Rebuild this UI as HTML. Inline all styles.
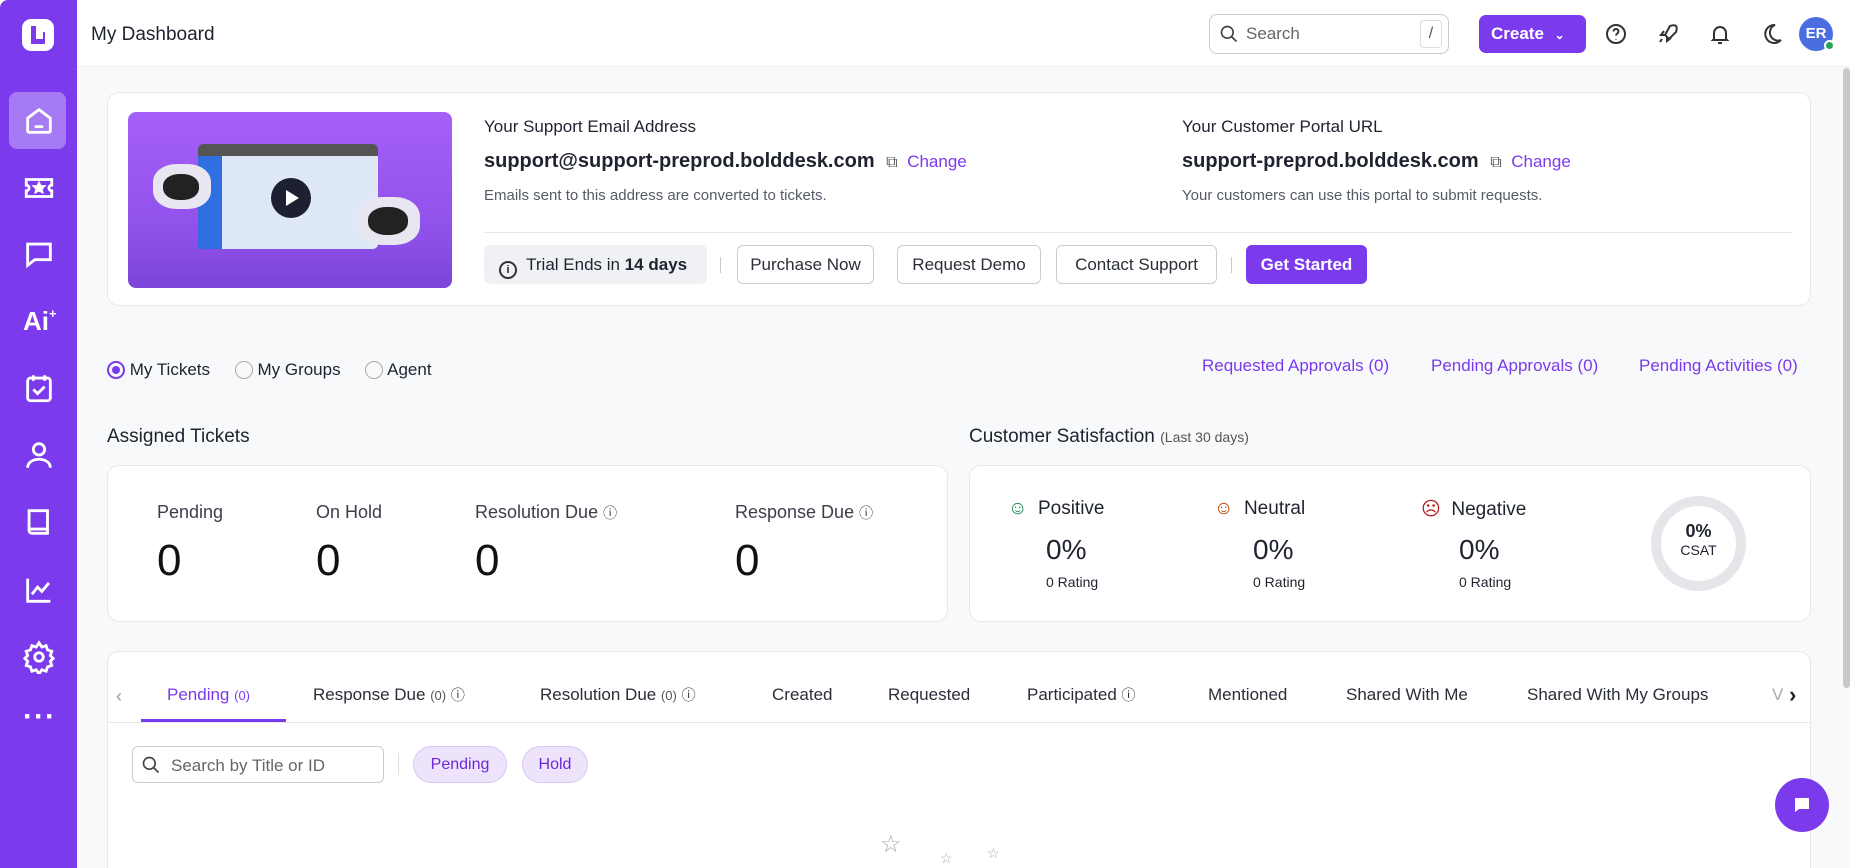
<!DOCTYPE html>
<html style="overflow:hidden;width:1850px;height:868px"><head><meta charset="utf-8"><style>
*{box-sizing:border-box;margin:0;padding:0}
body{width:1850px;height:868px;overflow:hidden;background:#f8f9fb;font-family:"Liberation Sans",sans-serif;color:#1f2330;position:relative}
.a{position:absolute}
.side{left:0;top:0;width:77px;height:868px;background:#7c3aed;border-radius:8px 0 0 0}
.ic{position:absolute;left:22px;width:34px;height:34px}
.hdr{left:77px;top:0;width:1773px;height:67px;background:#fff;border-bottom:1px solid #eceef2}
.card{background:#fff;border:1px solid #e6e8ec;border-radius:12px}
.btn{position:absolute;top:245px;height:39px;border:1px solid #c9ccd3;border-radius:6px;background:#fff;font-size:17px;line-height:37px;text-align:center;color:#2a2e38}
.lnk{color:#7c3aed}
.small{font-size:15px;color:#555b66}
.lbl{font-size:18px;color:#3a3f4a}
.num{font-size:44px;color:#111}
.tab{position:absolute;top:685px;font-size:17px;color:#2a2e38}
.tab small{font-size:13px;color:#555}
</style></head><body>
<div class="a side">
 <svg class="a" style="left:19px;top:16px" width="38" height="38" viewBox="0 0 38 38"><rect x="3" y="3" width="32" height="32" rx="9" fill="#fff"/><path d="M12 10v18h14V16H17v-6z" fill="#7c3aed"/><rect x="17" y="16" width="7" height="7" fill="#fff"/></svg>
 <div class="a" style="left:9px;top:92px;width:57px;height:57px;background:#a57af3;border-radius:8px"></div>
 <svg class="ic" style="top:104px" viewBox="0 0 24 24" fill="none" stroke="#fff" stroke-width="2"><path d="M4 10l8-6 8 6v9a1 1 0 01-1 1H5a1 1 0 01-1-1z"/><path d="M9 16h6"/></svg>
 <svg class="ic" style="top:171px" viewBox="0 0 24 24" fill="none" stroke="#fff" stroke-width="2"><path d="M3 6h18v4a2 2 0 000 4v4H3v-4a2 2 0 000-4z"/><path d="M12 9l1 2h2l-1.5 1.5.5 2-2-1-2 1 .5-2L9 11h2z" fill="#fff"/></svg>
 <svg class="ic" style="top:237px" viewBox="0 0 24 24" fill="none" stroke="#fff" stroke-width="2"><path d="M4 5h16v11H9l-5 4z"/></svg>
 <div class="a" style="left:23px;top:306px;color:#fff;font-weight:bold;font-size:26px">Ai<span style="font-size:13px;vertical-align:top">+</span></div>
 <svg class="ic" style="top:371px" viewBox="0 0 24 24" fill="none" stroke="#fff" stroke-width="2"><rect x="4" y="5" width="16" height="16" rx="2"/><path d="M8 3v4M16 3v4M8 13l3 3 5-5"/></svg>
 <svg class="ic" style="top:438px" viewBox="0 0 24 24" fill="none" stroke="#fff" stroke-width="2"><circle cx="12" cy="8" r="4"/><path d="M4 21c0-4 4-6 8-6s8 2 8 6"/></svg>
 <svg class="ic" style="top:505px" viewBox="0 0 24 24" fill="none" stroke="#fff" stroke-width="2"><path d="M5 4h13v16H7a2 2 0 01-2-2z"/><path d="M5 17h13"/></svg>
 <svg class="ic" style="top:573px" viewBox="0 0 24 24" fill="none" stroke="#fff" stroke-width="2"><path d="M4 4v16h16M7 15l4-5 3 3 5-6"/></svg>
 <svg class="ic" style="top:640px" viewBox="0 0 24 24" fill="none" stroke="#fff" stroke-width="2"><circle cx="12" cy="12" r="3"/><path d="M12 2l2 3 3-1 1 3 3 1-1 3 2 2-2 2 1 3-3 1-1 3-3-1-2 3-2-3-3 1-1-3-3-1 1-3-2-2 2-2-1-3 3-1 1-3 3 1z"/></svg>
 <div class="a" style="left:23px;top:700px;color:#fff;font-size:30px;font-weight:bold;letter-spacing:1px">···</div>
</div>
<div class="a hdr">
 <div class="a" style="left:14px;top:24px;font-size:19px">My Dashboard</div>
 <div class="a" style="left:1132px;top:14px;width:240px;height:40px;border:1px solid #c9ccd3;border-radius:8px">
  <svg class="a" style="left:9px;top:9px" width="20" height="20" viewBox="0 0 24 24" fill="none" stroke="#444" stroke-width="2"><circle cx="10" cy="10" r="7"/><path d="M15 15l6 6"/></svg>
  <span class="a" style="left:36px;top:9px;font-size:17px;color:#666">Search</span>
  <span class="a" style="right:6px;top:5px;width:22px;height:28px;border:1px solid #ddd;border-radius:4px;text-align:center;line-height:26px;color:#555">/</span>
 </div>
 <div class="a" style="left:1402px;top:15px;width:107px;height:38px;background:#7c3aed;border-radius:7px;color:#fff;font-size:17px;font-weight:bold;line-height:38px;padding-left:12px">Create <span style="font-size:12px;margin-left:6px">&#8964;</span></div>
 <svg class="a" style="left:1527px;top:22px" width="24" height="24" viewBox="0 0 24 24" fill="none" stroke="#333" stroke-width="2"><circle cx="12" cy="12" r="9"/><path d="M9.5 9.5a2.5 2.5 0 015 0c0 2-2.5 2-2.5 4M12 17v.5"/></svg>
 <svg class="a" style="left:1579px;top:22px" width="24" height="24" viewBox="0 0 24 24" fill="none" stroke="#333" stroke-width="2"><path d="M14 4c3-1 5-1 6 0 1 1 1 3 0 6l-7 7-4-4z"/><path d="M9 13l-4 0 3-4M11 15v4l4-3M6 17l-2 3"/></svg>
 <svg class="a" style="left:1631px;top:22px" width="24" height="24" viewBox="0 0 24 24" fill="none" stroke="#333" stroke-width="2"><path d="M6 17V11a6 6 0 0112 0v6l1 1H5zM10 21h4"/></svg>
 <svg class="a" style="left:1683px;top:22px" width="24" height="24" viewBox="0 0 24 24" fill="none" stroke="#333" stroke-width="2"><path d="M15 3a9 9 0 106 15A8 8 0 0115 3z"/></svg>
 <div class="a" style="left:1722px;top:17px;width:34px;height:34px;border-radius:50%;background:#4a6ee0;color:#fff;font-size:15px;font-weight:bold;text-align:center;line-height:34px">ER</div>
 <div class="a" style="left:1747px;top:40px;width:11px;height:11px;border-radius:50%;background:#22a55a;border:2px solid #fff"></div>
</div>
<div class="a" style="left:1843px;top:68px;width:7px;height:620px;background:#c8c8c8;border-radius:4px"></div>

<div class="a card" style="left:107px;top:92px;width:1704px;height:214px">
 <div class="a" style="left:20px;top:19px;width:324px;height:176px;border-radius:8px;background:linear-gradient(#a560f7,#8f50ea 70%,#7a45d8)">
  <div class="a" style="left:70px;top:32px;width:180px;height:105px;background:#dfe8f7;border-radius:5px;border-top:12px solid #555"></div>
  <div class="a" style="left:70px;top:44px;width:24px;height:93px;background:#2f6fe0"></div>
  <div class="a" style="left:25px;top:52px;width:58px;height:45px;background:#e8e6f0;border-radius:40%"></div>
  <div class="a" style="left:35px;top:62px;width:36px;height:26px;background:#222;border-radius:45%"></div>
  <div class="a" style="left:230px;top:85px;width:62px;height:48px;background:#e8e6f0;border-radius:40%"></div>
  <div class="a" style="left:240px;top:95px;width:40px;height:28px;background:#222;border-radius:45%"></div>
  <div class="a" style="left:143px;top:66px;width:40px;height:40px;border-radius:50%;background:#1c2030"></div>
  <div class="a" style="left:158px;top:78px;width:0;height:0;border-left:13px solid #fff;border-top:8px solid transparent;border-bottom:8px solid transparent"></div>
 </div>
 <div class="a" style="left:376px;top:24px;font-size:17px">Your Support Email Address</div>
 <div class="a" style="left:376px;top:57px;font-size:20px;font-weight:bold">support@support-preprod.bolddesk.com <span style="font-size:16px;color:#555;font-weight:normal;margin-left:6px">&#10697;</span> <span class="lnk" style="font-size:17px;font-weight:normal;margin-left:4px">Change</span></div>
 <div class="a small" style="left:376px;top:94px">Emails sent to this address are converted to tickets.</div>
 <div class="a" style="left:1074px;top:24px;font-size:17px">Your Customer Portal URL</div>
 <div class="a" style="left:1074px;top:57px;font-size:20px;font-weight:bold">support-preprod.bolddesk.com <span style="font-size:16px;color:#555;font-weight:normal;margin-left:6px">&#10697;</span> <span class="lnk" style="font-size:17px;font-weight:normal;margin-left:4px">Change</span></div>
 <div class="a small" style="left:1074px;top:94px">Your customers can use this portal to submit requests.</div>
 <div class="a" style="left:376px;top:139px;width:1308px;border-top:1px solid #e6e8ec"></div>
</div>
<div class="a" style="left:484px;top:245px;width:223px;height:39px;background:#f0f1f4;border-radius:6px;font-size:17px;line-height:39px;padding-left:15px"><span style="display:inline-block;width:18px;height:18px;border:2px solid #333;border-radius:50%;font-size:11px;line-height:14px;text-align:center;vertical-align:-3px;font-weight:bold">i</span>&nbsp; Trial Ends in <b>14 days</b></div>
<div class="a" style="left:720px;top:257px;height:16px;border-left:1px solid #ccc"></div>
<div class="btn" style="left:737px;width:137px">Purchase Now</div>
<div class="btn" style="left:897px;width:144px">Request Demo</div>
<div class="btn" style="left:1056px;width:161px">Contact Support</div>
<div class="a" style="left:1231px;top:257px;height:16px;border-left:1px solid #ccc"></div>
<div class="btn" style="left:1246px;width:121px;background:#7c3aed;border-color:#7c3aed;color:#fff;font-weight:bold">Get Started</div>

<div class="a" style="left:107px;top:360px;font-size:17px;line-height:20px">
 <span style="display:inline-block;width:18px;height:18px;border:2px solid #7c3aed;border-radius:50%;vertical-align:-4px;position:relative"><span style="position:absolute;left:3px;top:3px;width:8px;height:8px;border-radius:50%;background:#7c3aed"></span></span> My Tickets
 <span style="display:inline-block;width:18px;height:18px;border:1px solid #aaa;border-radius:50%;vertical-align:-4px;margin-left:20px"></span> My Groups
 <span style="display:inline-block;width:18px;height:18px;border:1px solid #aaa;border-radius:50%;vertical-align:-4px;margin-left:20px"></span> Agent
</div>
<div class="a lnk" style="left:1202px;top:356px;font-size:17px">Requested Approvals (0)</div>
<div class="a lnk" style="left:1431px;top:356px;font-size:17px">Pending Approvals (0)</div>
<div class="a lnk" style="left:1639px;top:356px;font-size:17px">Pending Activities (0)</div>

<div class="a" style="left:107px;top:426px;font-size:19px">Assigned Tickets</div>
<div class="a card" style="left:107px;top:465px;width:841px;height:157px">
 <div class="a lbl" style="left:49px;top:36px">Pending</div><div class="a num" style="left:49px;top:70px">0</div>
 <div class="a lbl" style="left:208px;top:36px">On Hold</div><div class="a num" style="left:208px;top:70px">0</div>
 <div class="a lbl" style="left:367px;top:36px">Resolution Due <span style="font-size:14px">&#9432;</span></div><div class="a num" style="left:367px;top:70px">0</div>
 <div class="a lbl" style="left:627px;top:36px">Response Due <span style="font-size:14px">&#9432;</span></div><div class="a num" style="left:627px;top:70px">0</div>
</div>
<div class="a" style="left:969px;top:426px;font-size:19px">Customer Satisfaction <span style="font-size:14px;color:#555">(Last 30 days)</span></div>
<div class="a card" style="left:969px;top:465px;width:842px;height:157px">
 <div class="a" style="left:38px;top:32px;font-size:19px"><span style="color:#1a8a4a">&#9786;</span>&nbsp; Positive</div>
 <div class="a" style="left:76px;top:68px;font-size:28px">0%</div><div class="a" style="left:76px;top:108px;font-size:14px">0 Rating</div>
 <div class="a" style="left:244px;top:32px;font-size:19px"><span style="color:#c2410c">&#9786;</span>&nbsp; Neutral</div>
 <div class="a" style="left:283px;top:68px;font-size:28px">0%</div><div class="a" style="left:283px;top:108px;font-size:14px">0 Rating</div>
 <div class="a" style="left:451px;top:32px;font-size:19px"><span style="color:#b91c1c">&#9785;</span>&nbsp; Negative</div>
 <div class="a" style="left:489px;top:68px;font-size:28px">0%</div><div class="a" style="left:489px;top:108px;font-size:14px">0 Rating</div>
 <div class="a" style="left:681px;top:30px;width:95px;height:95px;border-radius:50%;border:10px solid #e5e6e9;text-align:center;padding-top:15px"><div style="font-size:18px;font-weight:bold">0%</div><div style="font-size:14px">CSAT</div></div>
</div>

<div class="a card" style="left:107px;top:651px;width:1704px;height:230px"></div>
<div class="a" style="left:107px;top:722px;width:1704px;border-top:1px solid #e6e8ec"></div>
<div class="a" style="left:116px;top:686px;font-size:18px;color:#999">&#8249;</div>
<div class="tab" style="left:167px;color:#7c3aed">Pending <small style="color:#7c3aed">(0)</small></div>
<div class="a" style="left:141px;top:719px;width:145px;height:3px;background:#7c3aed"></div>
<div class="tab" style="left:313px">Response Due <small>(0)</small> <span style="font-size:14px">&#9432;</span></div>
<div class="tab" style="left:540px">Resolution Due <small>(0)</small> <span style="font-size:14px">&#9432;</span></div>
<div class="tab" style="left:772px">Created</div>
<div class="tab" style="left:888px">Requested</div>
<div class="tab" style="left:1027px">Participated <span style="font-size:14px">&#9432;</span></div>
<div class="tab" style="left:1208px">Mentioned</div>
<div class="tab" style="left:1346px">Shared With Me</div>
<div class="tab" style="left:1527px">Shared With My Groups</div>
<div class="tab" style="left:1772px;color:#aaa">V</div>
<div class="a" style="left:1789px;top:682px;font-size:22px;font-weight:bold">&#8250;</div>
<div class="a" style="left:132px;top:746px;width:252px;height:37px;border:1px solid #c9ccd3;border-radius:6px">
 <svg class="a" style="left:8px;top:8px" width="20" height="20" viewBox="0 0 24 24" fill="none" stroke="#444" stroke-width="2"><circle cx="10" cy="10" r="7"/><path d="M15 15l6 6"/></svg>
 <span class="a" style="left:38px;top:9px;font-size:17px;color:#666">Search by Title or ID</span>
</div>
<div class="a" style="left:398px;top:753px;height:22px;border-left:1px solid #ddd"></div>
<div class="a" style="left:413px;top:746px;width:94px;height:37px;border-radius:19px;background:#ede4fb;border:1px solid #d9c8f7;color:#6d28d9;font-size:16px;text-align:center;line-height:35px">Pending</div>
<div class="a" style="left:522px;top:746px;width:66px;height:37px;border-radius:19px;background:#ede4fb;border:1px solid #d9c8f7;color:#6d28d9;font-size:16px;text-align:center;line-height:35px">Hold</div>
<div class="a" style="left:880px;top:830px;font-size:24px;color:#aaa">&#9734;</div>
<div class="a" style="left:940px;top:850px;font-size:14px;color:#aaa">&#9734;</div>
<div class="a" style="left:987px;top:845px;font-size:14px;color:#aaa">&#9734;</div>
<div class="a" style="left:1775px;top:778px;width:54px;height:54px;border-radius:50%;background:#7c3aed"></div>
<svg class="a" style="left:1790px;top:793px" width="24" height="24" viewBox="0 0 24 24"><path d="M5 5h14v11H9l-4 3z" fill="#fff"/></svg>
</body></html>
